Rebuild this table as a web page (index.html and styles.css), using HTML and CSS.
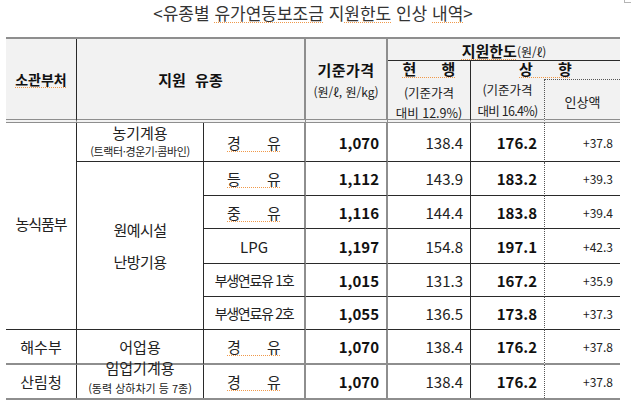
FILE: index.html
```html
<!DOCTYPE html>
<html lang="ko">
<head>
<meta charset="utf-8">
<title>유종별 유가연동보조금 지원한도 인상 내역</title>
<link rel="stylesheet" href="styles.css">
</head>
<body>
<div class="page">
  <span class="mark"></span>
  <h1 class="title">&lt;유종별 <span class="sp">유가연동보조금</span> 지<span class="sp">원한도</span> 인상 <span class="sp">내역</span>&gt;</h1>

  <div class="tbl">
    <!-- header -->
    <div class="c h r3 br1 bbd"><span class="hb sm14 sp">소관부처</span></div>
    <div class="c h r3 s2 br2 bbd"><span class="hb ws">지원 유종</span></div>
    <div class="c h r3 br2 bbd pt3">
      <span class="hb l22 ls5">기준가격</span>
      <span class="f12 l22">(원/ℓ, 원/kg)</span>
    </div>
    <div class="c h s3 bbh"><span><span class="hb sp">지원한도</span><span class="f12">(원/ℓ)</span></span></div>
    <div class="c h r2 br1 bbd top">
      <span class="hb sp wide l15">현 행</span>
      <span class="f125 l20 mt7">(기준가격</span>
      <span class="f125 l20">대비 12.9%)</span>
    </div>
    <div class="c h s2 pb3"><span class="hb sp wide2">상 향</span></div>
    <div class="c h bbd top">
      <span class="f125 l21">(기준가격</span>
      <span class="f125 l21 tight">대비 16.4%)</span>
    </div>
    <div class="c h bld btd bbd pt3"><span class="f13">인상액</span></div>

    <!-- body -->
    <div class="row">
      <div class="c r6 br1 pb6"><span class="ko ls-1">농식품부</span></div>
      <div class="c br1">
        <span class="ko l19">농기계용</span>
        <span class="note l19">(트랙터·경운기·콤바인)</span>
      </div>
      <div class="c br2"><span class="ko sp fuel">경 유</span></div>
      <div class="c num br2 b">1,070</div>
      <div class="c num br1">138.4</div>
      <div class="c num b">176.2</div>
      <div class="c num bld sm">+37.8</div>
    </div>
    <div class="row">
      <div class="c r5 br1">
        <span class="ko l32 ls-05">원예시설</span>
        <span class="ko l32 ls-05">난방기용</span>
      </div>
      <div class="c br2"><span class="ko sp fuel">등 유</span></div>
      <div class="c num br2 b">1,112</div>
      <div class="c num br1">143.9</div>
      <div class="c num b">183.2</div>
      <div class="c num bld sm">+39.3</div>
    </div>
    <div class="row">
      <div class="c br2"><span class="ko sp fuel">중 유</span></div>
      <div class="c num br2 b">1,116</div>
      <div class="c num br1">144.4</div>
      <div class="c num b">183.8</div>
      <div class="c num bld sm">+39.4</div>
    </div>
    <div class="row">
      <div class="c br2"><span class="ko">LPG</span></div>
      <div class="c num br2 b">1,197</div>
      <div class="c num br1">154.8</div>
      <div class="c num b">197.1</div>
      <div class="c num bld sm">+42.3</div>
    </div>
    <div class="row">
      <div class="c br2"><span class="ko14">부생연료유 1호</span></div>
      <div class="c num br2 b">1,015</div>
      <div class="c num br1">131.3</div>
      <div class="c num b">167.2</div>
      <div class="c num bld sm">+35.9</div>
    </div>
    <div class="row">
      <div class="c br2"><span class="ko14">부생연료유 2호</span></div>
      <div class="c num br2 b">1,055</div>
      <div class="c num br1">136.5</div>
      <div class="c num b">173.8</div>
      <div class="c num bld sm">+37.3</div>
    </div>
    <div class="row sec">
      <div class="c br1"><span class="ko">해수부</span></div>
      <div class="c br1"><span class="ko">어업용</span></div>
      <div class="c br2"><span class="ko sp fuel">경 유</span></div>
      <div class="c num br2 b">1,070</div>
      <div class="c num br1">138.4</div>
      <div class="c num b">176.2</div>
      <div class="c num bld sm">+37.8</div>
    </div>
    <div class="row last">
      <div class="c br1"><span class="ko">산림청</span></div>
      <div class="c br1 top">
        <span class="ko l20 up">임업기계용</span>
        <span class="note2 l20">(동력 상하차기 등 7종)</span>
      </div>
      <div class="c br2"><span class="ko sp fuel">경 유</span></div>
      <div class="c num br2 b">1,070</div>
      <div class="c num br1">138.4</div>
      <div class="c num b">176.2</div>
      <div class="c num bld sm">+37.8</div>
    </div>
  </div>
</div>
</body>
</html>
```

FILE: styles.css
```css
* { box-sizing: border-box; }

body {
  margin: 0;
  background: #fff;
  font-family: "Noto Sans CJK KR", "Noto Sans", sans-serif;
  color: #222;
}

.page {
  position: relative;
  width: 640px;
  height: 402px;
  overflow: hidden;
}

.mark {
  position: absolute;
  left: 624px;
  top: -2px;
  width: 7px;
  height: 5px;
  border-left: 1px solid #b5b5b5;
  border-bottom: 1px solid #b5b5b5;
}

.title {
  margin: 0 0 12px 6px;
  width: 614px;
  text-align: center;
  font-size: 17px;
  font-weight: 400;
  line-height: 25px;
  color: #333;
}

.sp {
  text-decoration: underline dotted #f0994a;
  text-decoration-thickness: 1px;
  text-decoration-skip-ink: none;
  text-underline-offset: 2px;
}

.tbl {
  display: grid;
  grid-template-columns: 71px 127px 102px 82px 83px 73px 76px;
  grid-template-rows: 22px 18px 44px 39px 34px 33px 35px 33px 33px 35px 33px;
  width: 614px;
  margin-left: 6px;
  border-top: 2px solid #8e8e8e;
  border-bottom: 2px solid #8e8e8e;
}

.row { display: contents; }

.c {
  display: flex;
  flex-direction: column;
  align-items: center;
  justify-content: center;
  min-width: 0;
  white-space: nowrap;
}

.row > .c { border-bottom: 1px solid #2a2a2a; }
.row.sec > .c { border-bottom: 2px solid #8e8e8e; }
.row.last > .c { border-bottom: none; }

.h { background: #f2f2f2; color: #111; }

.r2 { grid-row: span 2; }
.r3 { grid-row: span 3; }
.r5 { grid-row: span 5; }
.r6 { grid-row: span 6; }
.s2 { grid-column: span 2; }
.s3 { grid-column: span 3; }

.br1 { border-right: 1px solid #2a2a2a; }
.br2 { border-right: 2px solid #8e8e8e; }
.bld { border-left: 1px dotted #555; }
.btd { border-top: 1px dotted #555; }
.bbd { border-bottom: 4px double #8e8e8e; }
.bbh { border-bottom: 1px solid #2a2a2a; }

.top { justify-content: flex-start; }
.pt3 { padding-top: 3px; }
.pb3 { padding-bottom: 3px; }
.pb6 { padding-bottom: 6px; }
.mt7 { margin-top: 7px; }

.hb { font-weight: 700; font-size: 15px; }
.sm14 { font-size: 14px; }
.ws { word-spacing: 5px; }
.ls5 { letter-spacing: 0.5px; }
.wide { word-spacing: 21px; }
.wide2 { word-spacing: 21px; }
.f12 { font-size: 12px; font-weight: 400; color: #222; }
.f125 { font-size: 12.5px; color: #222; }
.f13 { font-size: 13px; color: #222; }
.tight { letter-spacing: -0.7px; }

.l15 { line-height: 15px; }
.l19 { line-height: 19px; }
.l20 { line-height: 20px; }
.l21 { line-height: 21px; }
.l22 { line-height: 22px; }
.l32 { line-height: 32px; }

.ko { font-size: 15px; color: #222; }
.ko14 { font-size: 14px; letter-spacing: -1.3px; color: #222; }
.ls-1 { letter-spacing: -1px; }
.ls-05 { letter-spacing: -0.5px; }
.fuel { word-spacing: 22px; }
.note { font-size: 11px; letter-spacing: -0.4px; color: #222; }
.note2 { font-size: 11px; color: #222; }
.up { margin-top: -7px; }

.num {
  align-items: flex-end;
  padding-right: 7px;
  font-size: 15px;
  color: #222;
}
.num.b { font-weight: 700; color: #111; }
.num.sm { font-size: 12px; }
```
